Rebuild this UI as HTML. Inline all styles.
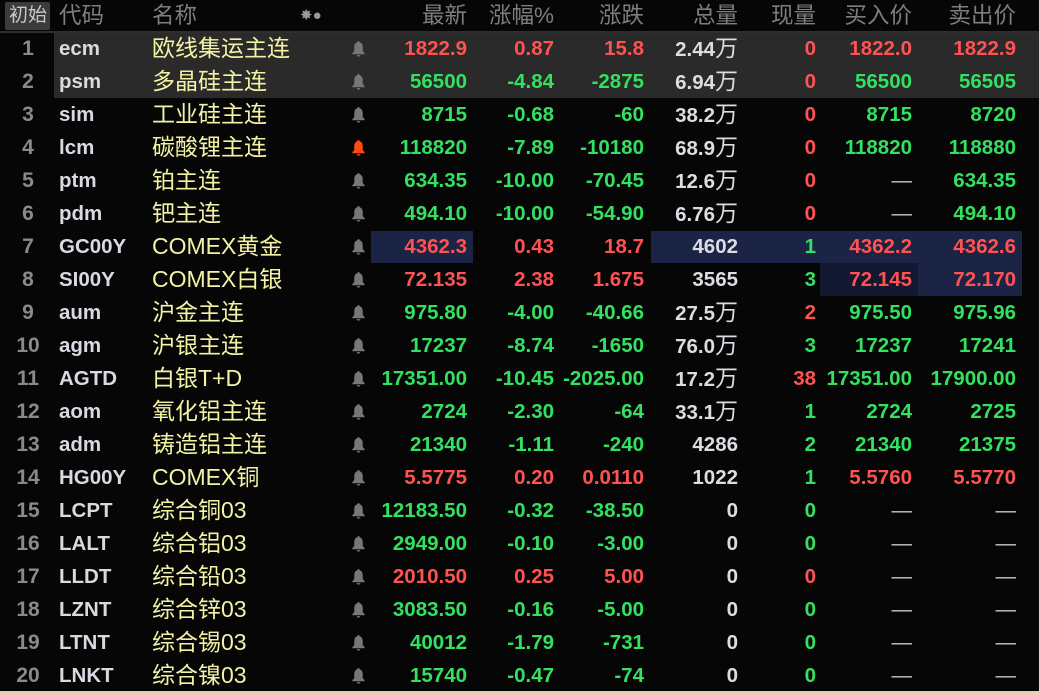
<!DOCTYPE html>
<html><head><meta charset="utf-8"><style>
*{margin:0;padding:0;box-sizing:border-box}
html,body{width:1039px;height:693px;overflow:hidden}
body{background:#060606;position:relative;font-family:"Liberation Sans","Noto Sans CJK SC",sans-serif}
.h{position:absolute;top:0;height:31px;line-height:32px;font-size:22.5px;color:#7e7e7e;white-space:nowrap}
.hr{position:absolute;left:0;top:31px;width:1039px;height:2px;background:#2e2e2e}
.r{position:absolute;left:0;width:1039px;height:33px}
.r div{position:absolute;top:0;height:33px;line-height:33px;white-space:nowrap;font-weight:bold;font-size:20.5px}
.r .n{left:0;width:56px;text-align:center;color:#8a8a8a;font-size:21px}
.c{left:59px;color:#d9d9e2}
.r .m{left:152px;color:#f3f3a6;font-weight:normal;font-size:23px}
.b{left:351px;width:16px}
.b svg{position:absolute;top:8px;left:0}
.p1{right:572px}.p2{right:485px}.p3{right:395px}.p4{right:301px}.p5{right:223px}.p6{right:127px}.p7{right:23px}
.R{color:#ff5252}.G{color:#33e060}.W{color:#dcdce2}.r .D{color:#c8c8c8;font-weight:normal}
.w{font-weight:normal;font-size:23px}
.hl{position:absolute;background:#1b2444}
</style></head><body>
<div style="position:absolute;left:5px;top:2px;width:45px;height:28px;background:#3b3b3b;border-radius:2px"></div>
<div class="h" style="left:9px;color:#c8c8c8;font-size:19px">初始</div>
<div class="h" style="left:59px">代码</div>
<div class="h" style="left:152px">名称</div>
<div class="h" style="left:300px;font-size:15px;color:#999">✸●</div>
<div class="h" style="right:572px">最新</div>
<div class="h" style="right:485px">涨幅%</div>
<div class="h" style="right:395px">涨跌</div>
<div class="h" style="right:301px">总量</div>
<div class="h" style="right:223px">现量</div>
<div class="h" style="right:127px">买入价</div>
<div class="h" style="right:23px">卖出价</div>
<div class="hr"></div>
<div style="position:absolute;left:54px;top:33px;width:985px;height:65px;background:#2a2a2a"></div>
<div class="hl" style="left:371px;top:231px;width:102px;height:32px"></div>
<div class="hl" style="left:651px;top:231px;width:371px;height:32px"></div>
<div class="hl" style="left:820px;top:263px;width:98px;height:33px;background:#121830"></div>
<div class="hl" style="left:918px;top:263px;width:104px;height:33px"></div>

<div class="r" style="top:32px"><div class="n">1</div><div class="c">ecm</div><div class="m">欧线集运主连</div><div class="b" style="color:#777"><svg width="15" height="17" viewBox="0 0 14 16"><path d="M7 1c-.8 0-1.2.5-1.2 1.1C3.8 2.8 3 4.5 3 7v3.5L1.2 12.5v.9h11.6v-.9L11 10.5V7c0-2.5-.8-4.2-2.8-4.9C8.2 1.5 7.8 1 7 1zM5.3 14.2c.2.9.9 1.5 1.7 1.5s1.5-.6 1.7-1.5z" fill="currentColor"/></svg></div><div class="p1 R">1822.9</div><div class="p2 R">0.87</div><div class="p3 R">15.8</div><div class="p4 W">2.44<span class="w">万</span></div><div class="p5 R">0</div><div class="p6 R">1822.0</div><div class="p7 R">1822.9</div></div>
<div class="r" style="top:65px"><div class="n">2</div><div class="c">psm</div><div class="m">多晶硅主连</div><div class="b" style="color:#777"><svg width="15" height="17" viewBox="0 0 14 16"><path d="M7 1c-.8 0-1.2.5-1.2 1.1C3.8 2.8 3 4.5 3 7v3.5L1.2 12.5v.9h11.6v-.9L11 10.5V7c0-2.5-.8-4.2-2.8-4.9C8.2 1.5 7.8 1 7 1zM5.3 14.2c.2.9.9 1.5 1.7 1.5s1.5-.6 1.7-1.5z" fill="currentColor"/></svg></div><div class="p1 G">56500</div><div class="p2 G">-4.84</div><div class="p3 G">-2875</div><div class="p4 W">6.94<span class="w">万</span></div><div class="p5 R">0</div><div class="p6 G">56500</div><div class="p7 G">56505</div></div>
<div class="r" style="top:98px"><div class="n">3</div><div class="c">sim</div><div class="m">工业硅主连</div><div class="b" style="color:#777"><svg width="15" height="17" viewBox="0 0 14 16"><path d="M7 1c-.8 0-1.2.5-1.2 1.1C3.8 2.8 3 4.5 3 7v3.5L1.2 12.5v.9h11.6v-.9L11 10.5V7c0-2.5-.8-4.2-2.8-4.9C8.2 1.5 7.8 1 7 1zM5.3 14.2c.2.9.9 1.5 1.7 1.5s1.5-.6 1.7-1.5z" fill="currentColor"/></svg></div><div class="p1 G">8715</div><div class="p2 G">-0.68</div><div class="p3 G">-60</div><div class="p4 W">38.2<span class="w">万</span></div><div class="p5 R">0</div><div class="p6 G">8715</div><div class="p7 G">8720</div></div>
<div class="r" style="top:131px"><div class="n">4</div><div class="c">lcm</div><div class="m">碳酸锂主连</div><div class="b" style="color:#ff4a10"><svg width="15" height="17" viewBox="0 0 14 16"><path d="M7 1c-.8 0-1.2.5-1.2 1.1C3.8 2.8 3 4.5 3 7v3.5L1.2 12.5v.9h11.6v-.9L11 10.5V7c0-2.5-.8-4.2-2.8-4.9C8.2 1.5 7.8 1 7 1zM5.3 14.2c.2.9.9 1.5 1.7 1.5s1.5-.6 1.7-1.5z" fill="currentColor"/></svg></div><div class="p1 G">118820</div><div class="p2 G">-7.89</div><div class="p3 G">-10180</div><div class="p4 W">68.9<span class="w">万</span></div><div class="p5 R">0</div><div class="p6 G">118820</div><div class="p7 G">118880</div></div>
<div class="r" style="top:164px"><div class="n">5</div><div class="c">ptm</div><div class="m">铂主连</div><div class="b" style="color:#777"><svg width="15" height="17" viewBox="0 0 14 16"><path d="M7 1c-.8 0-1.2.5-1.2 1.1C3.8 2.8 3 4.5 3 7v3.5L1.2 12.5v.9h11.6v-.9L11 10.5V7c0-2.5-.8-4.2-2.8-4.9C8.2 1.5 7.8 1 7 1zM5.3 14.2c.2.9.9 1.5 1.7 1.5s1.5-.6 1.7-1.5z" fill="currentColor"/></svg></div><div class="p1 G">634.35</div><div class="p2 G">-10.00</div><div class="p3 G">-70.45</div><div class="p4 W">12.6<span class="w">万</span></div><div class="p5 R">0</div><div class="p6 D">—</div><div class="p7 G">634.35</div></div>
<div class="r" style="top:197px"><div class="n">6</div><div class="c">pdm</div><div class="m">钯主连</div><div class="b" style="color:#777"><svg width="15" height="17" viewBox="0 0 14 16"><path d="M7 1c-.8 0-1.2.5-1.2 1.1C3.8 2.8 3 4.5 3 7v3.5L1.2 12.5v.9h11.6v-.9L11 10.5V7c0-2.5-.8-4.2-2.8-4.9C8.2 1.5 7.8 1 7 1zM5.3 14.2c.2.9.9 1.5 1.7 1.5s1.5-.6 1.7-1.5z" fill="currentColor"/></svg></div><div class="p1 G">494.10</div><div class="p2 G">-10.00</div><div class="p3 G">-54.90</div><div class="p4 W">6.76<span class="w">万</span></div><div class="p5 R">0</div><div class="p6 D">—</div><div class="p7 G">494.10</div></div>
<div class="r" style="top:230px"><div class="n">7</div><div class="c">GC00Y</div><div class="m">COMEX黄金</div><div class="b" style="color:#777"><svg width="15" height="17" viewBox="0 0 14 16"><path d="M7 1c-.8 0-1.2.5-1.2 1.1C3.8 2.8 3 4.5 3 7v3.5L1.2 12.5v.9h11.6v-.9L11 10.5V7c0-2.5-.8-4.2-2.8-4.9C8.2 1.5 7.8 1 7 1zM5.3 14.2c.2.9.9 1.5 1.7 1.5s1.5-.6 1.7-1.5z" fill="currentColor"/></svg></div><div class="p1 R">4362.3</div><div class="p2 R">0.43</div><div class="p3 R">18.7</div><div class="p4 W">4602</div><div class="p5 G">1</div><div class="p6 R">4362.2</div><div class="p7 R">4362.6</div></div>
<div class="r" style="top:263px"><div class="n">8</div><div class="c">SI00Y</div><div class="m">COMEX白银</div><div class="b" style="color:#777"><svg width="15" height="17" viewBox="0 0 14 16"><path d="M7 1c-.8 0-1.2.5-1.2 1.1C3.8 2.8 3 4.5 3 7v3.5L1.2 12.5v.9h11.6v-.9L11 10.5V7c0-2.5-.8-4.2-2.8-4.9C8.2 1.5 7.8 1 7 1zM5.3 14.2c.2.9.9 1.5 1.7 1.5s1.5-.6 1.7-1.5z" fill="currentColor"/></svg></div><div class="p1 R">72.135</div><div class="p2 R">2.38</div><div class="p3 R">1.675</div><div class="p4 W">3565</div><div class="p5 G">3</div><div class="p6 R">72.145</div><div class="p7 R">72.170</div></div>
<div class="r" style="top:296px"><div class="n">9</div><div class="c">aum</div><div class="m">沪金主连</div><div class="b" style="color:#777"><svg width="15" height="17" viewBox="0 0 14 16"><path d="M7 1c-.8 0-1.2.5-1.2 1.1C3.8 2.8 3 4.5 3 7v3.5L1.2 12.5v.9h11.6v-.9L11 10.5V7c0-2.5-.8-4.2-2.8-4.9C8.2 1.5 7.8 1 7 1zM5.3 14.2c.2.9.9 1.5 1.7 1.5s1.5-.6 1.7-1.5z" fill="currentColor"/></svg></div><div class="p1 G">975.80</div><div class="p2 G">-4.00</div><div class="p3 G">-40.66</div><div class="p4 W">27.5<span class="w">万</span></div><div class="p5 R">2</div><div class="p6 G">975.50</div><div class="p7 G">975.96</div></div>
<div class="r" style="top:329px"><div class="n">10</div><div class="c">agm</div><div class="m">沪银主连</div><div class="b" style="color:#777"><svg width="15" height="17" viewBox="0 0 14 16"><path d="M7 1c-.8 0-1.2.5-1.2 1.1C3.8 2.8 3 4.5 3 7v3.5L1.2 12.5v.9h11.6v-.9L11 10.5V7c0-2.5-.8-4.2-2.8-4.9C8.2 1.5 7.8 1 7 1zM5.3 14.2c.2.9.9 1.5 1.7 1.5s1.5-.6 1.7-1.5z" fill="currentColor"/></svg></div><div class="p1 G">17237</div><div class="p2 G">-8.74</div><div class="p3 G">-1650</div><div class="p4 W">76.0<span class="w">万</span></div><div class="p5 G">3</div><div class="p6 G">17237</div><div class="p7 G">17241</div></div>
<div class="r" style="top:362px"><div class="n">11</div><div class="c">AGTD</div><div class="m">白银T+D</div><div class="b" style="color:#777"><svg width="15" height="17" viewBox="0 0 14 16"><path d="M7 1c-.8 0-1.2.5-1.2 1.1C3.8 2.8 3 4.5 3 7v3.5L1.2 12.5v.9h11.6v-.9L11 10.5V7c0-2.5-.8-4.2-2.8-4.9C8.2 1.5 7.8 1 7 1zM5.3 14.2c.2.9.9 1.5 1.7 1.5s1.5-.6 1.7-1.5z" fill="currentColor"/></svg></div><div class="p1 G">17351.00</div><div class="p2 G">-10.45</div><div class="p3 G">-2025.00</div><div class="p4 W">17.2<span class="w">万</span></div><div class="p5 R">38</div><div class="p6 G">17351.00</div><div class="p7 G">17900.00</div></div>
<div class="r" style="top:395px"><div class="n">12</div><div class="c">aom</div><div class="m">氧化铝主连</div><div class="b" style="color:#777"><svg width="15" height="17" viewBox="0 0 14 16"><path d="M7 1c-.8 0-1.2.5-1.2 1.1C3.8 2.8 3 4.5 3 7v3.5L1.2 12.5v.9h11.6v-.9L11 10.5V7c0-2.5-.8-4.2-2.8-4.9C8.2 1.5 7.8 1 7 1zM5.3 14.2c.2.9.9 1.5 1.7 1.5s1.5-.6 1.7-1.5z" fill="currentColor"/></svg></div><div class="p1 G">2724</div><div class="p2 G">-2.30</div><div class="p3 G">-64</div><div class="p4 W">33.1<span class="w">万</span></div><div class="p5 G">1</div><div class="p6 G">2724</div><div class="p7 G">2725</div></div>
<div class="r" style="top:428px"><div class="n">13</div><div class="c">adm</div><div class="m">铸造铝主连</div><div class="b" style="color:#777"><svg width="15" height="17" viewBox="0 0 14 16"><path d="M7 1c-.8 0-1.2.5-1.2 1.1C3.8 2.8 3 4.5 3 7v3.5L1.2 12.5v.9h11.6v-.9L11 10.5V7c0-2.5-.8-4.2-2.8-4.9C8.2 1.5 7.8 1 7 1zM5.3 14.2c.2.9.9 1.5 1.7 1.5s1.5-.6 1.7-1.5z" fill="currentColor"/></svg></div><div class="p1 G">21340</div><div class="p2 G">-1.11</div><div class="p3 G">-240</div><div class="p4 W">4286</div><div class="p5 G">2</div><div class="p6 G">21340</div><div class="p7 G">21375</div></div>
<div class="r" style="top:461px"><div class="n">14</div><div class="c">HG00Y</div><div class="m">COMEX铜</div><div class="b" style="color:#777"><svg width="15" height="17" viewBox="0 0 14 16"><path d="M7 1c-.8 0-1.2.5-1.2 1.1C3.8 2.8 3 4.5 3 7v3.5L1.2 12.5v.9h11.6v-.9L11 10.5V7c0-2.5-.8-4.2-2.8-4.9C8.2 1.5 7.8 1 7 1zM5.3 14.2c.2.9.9 1.5 1.7 1.5s1.5-.6 1.7-1.5z" fill="currentColor"/></svg></div><div class="p1 R">5.5775</div><div class="p2 R">0.20</div><div class="p3 R">0.0110</div><div class="p4 W">1022</div><div class="p5 G">1</div><div class="p6 R">5.5760</div><div class="p7 R">5.5770</div></div>
<div class="r" style="top:494px"><div class="n">15</div><div class="c">LCPT</div><div class="m">综合铜03</div><div class="b" style="color:#777"><svg width="15" height="17" viewBox="0 0 14 16"><path d="M7 1c-.8 0-1.2.5-1.2 1.1C3.8 2.8 3 4.5 3 7v3.5L1.2 12.5v.9h11.6v-.9L11 10.5V7c0-2.5-.8-4.2-2.8-4.9C8.2 1.5 7.8 1 7 1zM5.3 14.2c.2.9.9 1.5 1.7 1.5s1.5-.6 1.7-1.5z" fill="currentColor"/></svg></div><div class="p1 G">12183.50</div><div class="p2 G">-0.32</div><div class="p3 G">-38.50</div><div class="p4 W">0</div><div class="p5 G">0</div><div class="p6 D">—</div><div class="p7 D">—</div></div>
<div class="r" style="top:527px"><div class="n">16</div><div class="c">LALT</div><div class="m">综合铝03</div><div class="b" style="color:#777"><svg width="15" height="17" viewBox="0 0 14 16"><path d="M7 1c-.8 0-1.2.5-1.2 1.1C3.8 2.8 3 4.5 3 7v3.5L1.2 12.5v.9h11.6v-.9L11 10.5V7c0-2.5-.8-4.2-2.8-4.9C8.2 1.5 7.8 1 7 1zM5.3 14.2c.2.9.9 1.5 1.7 1.5s1.5-.6 1.7-1.5z" fill="currentColor"/></svg></div><div class="p1 G">2949.00</div><div class="p2 G">-0.10</div><div class="p3 G">-3.00</div><div class="p4 W">0</div><div class="p5 G">0</div><div class="p6 D">—</div><div class="p7 D">—</div></div>
<div class="r" style="top:560px"><div class="n">17</div><div class="c">LLDT</div><div class="m">综合铅03</div><div class="b" style="color:#777"><svg width="15" height="17" viewBox="0 0 14 16"><path d="M7 1c-.8 0-1.2.5-1.2 1.1C3.8 2.8 3 4.5 3 7v3.5L1.2 12.5v.9h11.6v-.9L11 10.5V7c0-2.5-.8-4.2-2.8-4.9C8.2 1.5 7.8 1 7 1zM5.3 14.2c.2.9.9 1.5 1.7 1.5s1.5-.6 1.7-1.5z" fill="currentColor"/></svg></div><div class="p1 R">2010.50</div><div class="p2 R">0.25</div><div class="p3 R">5.00</div><div class="p4 W">0</div><div class="p5 R">0</div><div class="p6 D">—</div><div class="p7 D">—</div></div>
<div class="r" style="top:593px"><div class="n">18</div><div class="c">LZNT</div><div class="m">综合锌03</div><div class="b" style="color:#777"><svg width="15" height="17" viewBox="0 0 14 16"><path d="M7 1c-.8 0-1.2.5-1.2 1.1C3.8 2.8 3 4.5 3 7v3.5L1.2 12.5v.9h11.6v-.9L11 10.5V7c0-2.5-.8-4.2-2.8-4.9C8.2 1.5 7.8 1 7 1zM5.3 14.2c.2.9.9 1.5 1.7 1.5s1.5-.6 1.7-1.5z" fill="currentColor"/></svg></div><div class="p1 G">3083.50</div><div class="p2 G">-0.16</div><div class="p3 G">-5.00</div><div class="p4 W">0</div><div class="p5 G">0</div><div class="p6 D">—</div><div class="p7 D">—</div></div>
<div class="r" style="top:626px"><div class="n">19</div><div class="c">LTNT</div><div class="m">综合锡03</div><div class="b" style="color:#777"><svg width="15" height="17" viewBox="0 0 14 16"><path d="M7 1c-.8 0-1.2.5-1.2 1.1C3.8 2.8 3 4.5 3 7v3.5L1.2 12.5v.9h11.6v-.9L11 10.5V7c0-2.5-.8-4.2-2.8-4.9C8.2 1.5 7.8 1 7 1zM5.3 14.2c.2.9.9 1.5 1.7 1.5s1.5-.6 1.7-1.5z" fill="currentColor"/></svg></div><div class="p1 G">40012</div><div class="p2 G">-1.79</div><div class="p3 G">-731</div><div class="p4 W">0</div><div class="p5 G">0</div><div class="p6 D">—</div><div class="p7 D">—</div></div>
<div class="r" style="top:659px"><div class="n">20</div><div class="c">LNKT</div><div class="m">综合镍03</div><div class="b" style="color:#777"><svg width="15" height="17" viewBox="0 0 14 16"><path d="M7 1c-.8 0-1.2.5-1.2 1.1C3.8 2.8 3 4.5 3 7v3.5L1.2 12.5v.9h11.6v-.9L11 10.5V7c0-2.5-.8-4.2-2.8-4.9C8.2 1.5 7.8 1 7 1zM5.3 14.2c.2.9.9 1.5 1.7 1.5s1.5-.6 1.7-1.5z" fill="currentColor"/></svg></div><div class="p1 G">15740</div><div class="p2 G">-0.47</div><div class="p3 G">-74</div><div class="p4 W">0</div><div class="p5 G">0</div><div class="p6 D">—</div><div class="p7 D">—</div></div>
<div style="position:absolute;left:0;top:691px;width:1039px;height:2px;background:#d8d8a0"></div>
</body></html>
